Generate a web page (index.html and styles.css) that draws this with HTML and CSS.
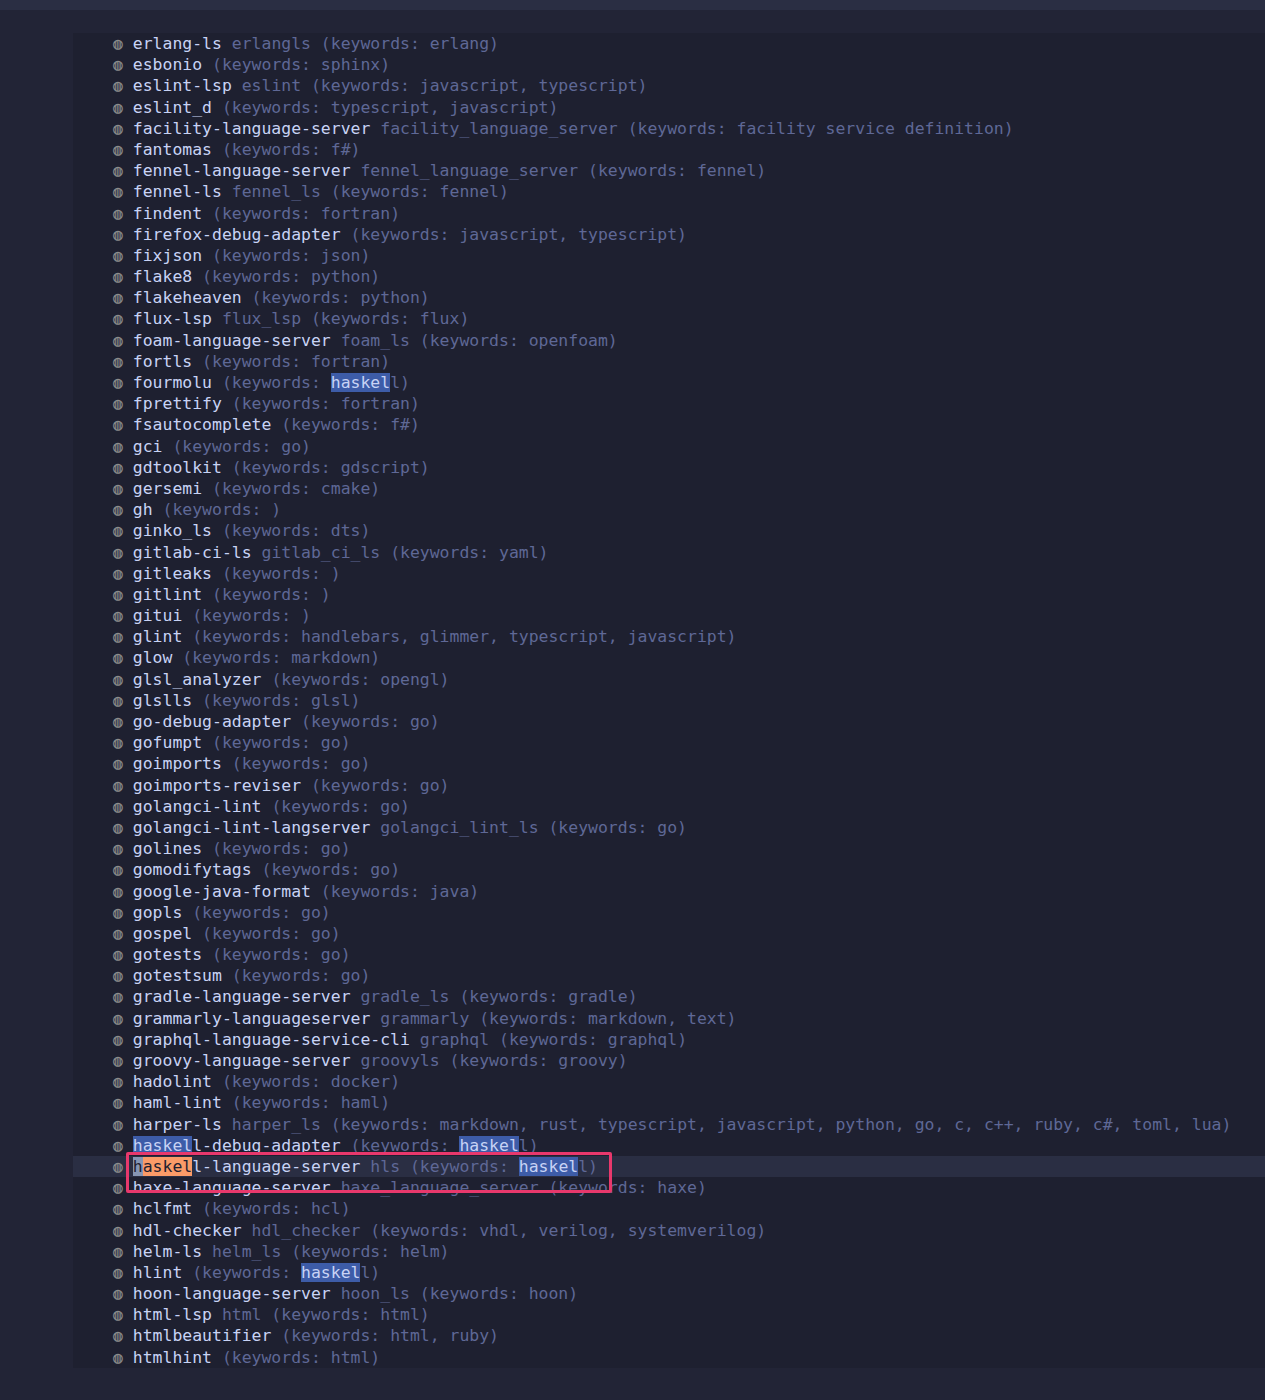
FILE: index.html
```html
<html lang="en">
<head>
<meta charset="utf-8">
<link rel="stylesheet" href="styles.css">
</head>
<body>
    <div class="topbar"></div>

    <div class="panel">
        <div class="row"><span class="dot">◍</span> <span class="name">erlang-ls</span> <span class="dim">erlangls (keywords: erlang)</span></div>
        <div class="row"><span class="dot">◍</span> <span class="name">esbonio</span> <span class="dim">(keywords: sphinx)</span></div>
        <div class="row"><span class="dot">◍</span> <span class="name">eslint-lsp</span> <span class="dim">eslint (keywords: javascript, typescript)</span></div>
        <div class="row"><span class="dot">◍</span> <span class="name">eslint_d</span> <span class="dim">(keywords: typescript, javascript)</span></div>
        <div class="row"><span class="dot">◍</span> <span class="name">facility-language-server</span> <span class="dim">facility_language_server (keywords: facility service definition)</span></div>
        <div class="row"><span class="dot">◍</span> <span class="name">fantomas</span> <span class="dim">(keywords: f#)</span></div>
        <div class="row"><span class="dot">◍</span> <span class="name">fennel-language-server</span> <span class="dim">fennel_language_server (keywords: fennel)</span></div>
        <div class="row"><span class="dot">◍</span> <span class="name">fennel-ls</span> <span class="dim">fennel_ls (keywords: fennel)</span></div>
        <div class="row"><span class="dot">◍</span> <span class="name">findent</span> <span class="dim">(keywords: fortran)</span></div>
        <div class="row"><span class="dot">◍</span> <span class="name">firefox-debug-adapter</span> <span class="dim">(keywords: javascript, typescript)</span></div>
        <div class="row"><span class="dot">◍</span> <span class="name">fixjson</span> <span class="dim">(keywords: json)</span></div>
        <div class="row"><span class="dot">◍</span> <span class="name">flake8</span> <span class="dim">(keywords: python)</span></div>
        <div class="row"><span class="dot">◍</span> <span class="name">flakeheaven</span> <span class="dim">(keywords: python)</span></div>
        <div class="row"><span class="dot">◍</span> <span class="name">flux-lsp</span> <span class="dim">flux_lsp (keywords: flux)</span></div>
        <div class="row"><span class="dot">◍</span> <span class="name">foam-language-server</span> <span class="dim">foam_ls (keywords: openfoam)</span></div>
        <div class="row"><span class="dot">◍</span> <span class="name">fortls</span> <span class="dim">(keywords: fortran)</span></div>
        <div class="row"><span class="dot">◍</span> <span class="name">fourmolu</span> <span class="dim">(keywords: <span class="match">haskel</span>l)</span></div>
        <div class="row"><span class="dot">◍</span> <span class="name">fprettify</span> <span class="dim">(keywords: fortran)</span></div>
        <div class="row"><span class="dot">◍</span> <span class="name">fsautocomplete</span> <span class="dim">(keywords: f#)</span></div>
        <div class="row"><span class="dot">◍</span> <span class="name">gci</span> <span class="dim">(keywords: go)</span></div>
        <div class="row"><span class="dot">◍</span> <span class="name">gdtoolkit</span> <span class="dim">(keywords: gdscript)</span></div>
        <div class="row"><span class="dot">◍</span> <span class="name">gersemi</span> <span class="dim">(keywords: cmake)</span></div>
        <div class="row"><span class="dot">◍</span> <span class="name">gh</span> <span class="dim">(keywords: )</span></div>
        <div class="row"><span class="dot">◍</span> <span class="name">ginko_ls</span> <span class="dim">(keywords: dts)</span></div>
        <div class="row"><span class="dot">◍</span> <span class="name">gitlab-ci-ls</span> <span class="dim">gitlab_ci_ls (keywords: yaml)</span></div>
        <div class="row"><span class="dot">◍</span> <span class="name">gitleaks</span> <span class="dim">(keywords: )</span></div>
        <div class="row"><span class="dot">◍</span> <span class="name">gitlint</span> <span class="dim">(keywords: )</span></div>
        <div class="row"><span class="dot">◍</span> <span class="name">gitui</span> <span class="dim">(keywords: )</span></div>
        <div class="row"><span class="dot">◍</span> <span class="name">glint</span> <span class="dim">(keywords: handlebars, glimmer, typescript, javascript)</span></div>
        <div class="row"><span class="dot">◍</span> <span class="name">glow</span> <span class="dim">(keywords: markdown)</span></div>
        <div class="row"><span class="dot">◍</span> <span class="name">glsl_analyzer</span> <span class="dim">(keywords: opengl)</span></div>
        <div class="row"><span class="dot">◍</span> <span class="name">glslls</span> <span class="dim">(keywords: glsl)</span></div>
        <div class="row"><span class="dot">◍</span> <span class="name">go-debug-adapter</span> <span class="dim">(keywords: go)</span></div>
        <div class="row"><span class="dot">◍</span> <span class="name">gofumpt</span> <span class="dim">(keywords: go)</span></div>
        <div class="row"><span class="dot">◍</span> <span class="name">goimports</span> <span class="dim">(keywords: go)</span></div>
        <div class="row"><span class="dot">◍</span> <span class="name">goimports-reviser</span> <span class="dim">(keywords: go)</span></div>
        <div class="row"><span class="dot">◍</span> <span class="name">golangci-lint</span> <span class="dim">(keywords: go)</span></div>
        <div class="row"><span class="dot">◍</span> <span class="name">golangci-lint-langserver</span> <span class="dim">golangci_lint_ls (keywords: go)</span></div>
        <div class="row"><span class="dot">◍</span> <span class="name">golines</span> <span class="dim">(keywords: go)</span></div>
        <div class="row"><span class="dot">◍</span> <span class="name">gomodifytags</span> <span class="dim">(keywords: go)</span></div>
        <div class="row"><span class="dot">◍</span> <span class="name">google-java-format</span> <span class="dim">(keywords: java)</span></div>
        <div class="row"><span class="dot">◍</span> <span class="name">gopls</span> <span class="dim">(keywords: go)</span></div>
        <div class="row"><span class="dot">◍</span> <span class="name">gospel</span> <span class="dim">(keywords: go)</span></div>
        <div class="row"><span class="dot">◍</span> <span class="name">gotests</span> <span class="dim">(keywords: go)</span></div>
        <div class="row"><span class="dot">◍</span> <span class="name">gotestsum</span> <span class="dim">(keywords: go)</span></div>
        <div class="row"><span class="dot">◍</span> <span class="name">gradle-language-server</span> <span class="dim">gradle_ls (keywords: gradle)</span></div>
        <div class="row"><span class="dot">◍</span> <span class="name">grammarly-languageserver</span> <span class="dim">grammarly (keywords: markdown, text)</span></div>
        <div class="row"><span class="dot">◍</span> <span class="name">graphql-language-service-cli</span> <span class="dim">graphql (keywords: graphql)</span></div>
        <div class="row"><span class="dot">◍</span> <span class="name">groovy-language-server</span> <span class="dim">groovyls (keywords: groovy)</span></div>
        <div class="row"><span class="dot">◍</span> <span class="name">hadolint</span> <span class="dim">(keywords: docker)</span></div>
        <div class="row"><span class="dot">◍</span> <span class="name">haml-lint</span> <span class="dim">(keywords: haml)</span></div>
        <div class="row"><span class="dot">◍</span> <span class="name">harper-ls</span> <span class="dim">harper_ls (keywords: markdown, rust, typescript, javascript, python, go, c, c++, ruby, c#, toml, lua)</span></div>
        <div class="row"><span class="dot">◍</span> <span class="name"><span class="match">haskel</span>l-debug-adapter</span> <span class="dim">(keywords: <span class="match">haskel</span>l)</span></div>
        <div class="row cursorline"><span class="dot">◍</span> <span class="name"><span class="current"><span class="cursor">h</span>askel</span>l-language-server</span> <span class="dim">hls (keywords: <span class="match">haskel</span>l)</span></div>
        <div class="row"><span class="dot">◍</span> <span class="name">haxe-language-server</span> <span class="dim">haxe_language_server (keywords: haxe)</span></div>
        <div class="row"><span class="dot">◍</span> <span class="name">hclfmt</span> <span class="dim">(keywords: hcl)</span></div>
        <div class="row"><span class="dot">◍</span> <span class="name">hdl-checker</span> <span class="dim">hdl_checker (keywords: vhdl, verilog, systemverilog)</span></div>
        <div class="row"><span class="dot">◍</span> <span class="name">helm-ls</span> <span class="dim">helm_ls (keywords: helm)</span></div>
        <div class="row"><span class="dot">◍</span> <span class="name">hlint</span> <span class="dim">(keywords: <span class="match">haskel</span>l)</span></div>
        <div class="row"><span class="dot">◍</span> <span class="name">hoon-language-server</span> <span class="dim">hoon_ls (keywords: hoon)</span></div>
        <div class="row"><span class="dot">◍</span> <span class="name">html-lsp</span> <span class="dim">html (keywords: html)</span></div>
        <div class="row"><span class="dot">◍</span> <span class="name">htmlbeautifier</span> <span class="dim">(keywords: html, ruby)</span></div>
        <div class="row"><span class="dot">◍</span> <span class="name">htmlhint</span> <span class="dim">(keywords: html)</span></div>

        <div class="callout"></div>
    </div>
</body>
</html>
```

FILE: styles.css
```css
body {
    margin: 0;
    background-color: #222436;
    font-family: "DejaVu Sans Mono", "Liberation Mono", monospace;
    font-size: 16.45px;
    line-height: 21.2px;
}

.topbar {
    height: 10px;
    background-color: #2a2e43;
}

.panel {
    position: relative;
    margin: 23px 0 0 73px;
    background-color: #1e2030;
}

.row {
    white-space: pre;
    height: 21.2px;
    padding-left: 40px;
    color: #c8d3f5;
}

.row.cursorline {
    background-color: #2a2e43;
}

.dot {
    color: #8c8c8c;
}

.name {
    color: #c8d3f5;
}

.dim {
    color: #5f6896;
}

.match {
    background-color: #3d5ca8;
    color: #c8d3f5;
}

.current {
    background-color: #fb9b68;
    color: #1e2030;
}

.cursor {
    background-color: #8796b4;
}

/* annotation drawn over the list */
.callout {
    position: absolute;
    left: 53px;
    top: 1119px;
    width: 480px;
    height: 35px;
    border: 3px solid #e8386c;
    border-radius: 2px;
}
```
